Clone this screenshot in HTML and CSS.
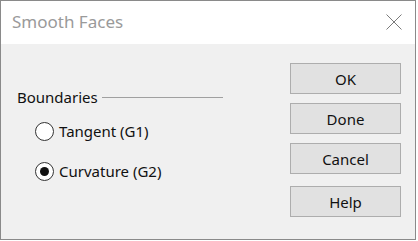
FILE: index.html
```html
<!DOCTYPE html>
<html>
<head>
<meta charset="utf-8">
<link rel="stylesheet" href="styles.css">
</head>
<body>
<div class="window">
  <div class="titlebar">
    <span class="title">Smooth Faces</span>
    <svg class="close" width="16" height="16" viewBox="0 0 16 16"><path d="M0.5 0.5 L15.5 15.5 M15.5 0.5 L0.5 15.5" stroke="#7a7a7a" stroke-width="1" fill="none"/></svg>
  </div>
  <div class="content">
    <div class="group">
      <div class="group-head"><span class="group-label">Boundaries</span><span class="rule"></span></div>
      <div class="radio-row"><span class="radio"></span><span class="radio-label">Tangent (G1)</span></div>
      <div class="radio-row"><span class="radio checked"></span><span class="radio-label">Curvature (G2)</span></div>
    </div>
    <div class="buttons">
      <div class="btn">OK</div>
      <div class="btn">Done</div>
      <div class="btn">Cancel</div>
      <div class="btn help">Help</div>
    </div>
  </div>
</div>
</body>
</html>
```
FILE: styles.css
```css
html, body { margin: 0; padding: 0; background: #ffffff; }
body { font-family: "Noto Sans", "Open Sans", sans-serif; }
.window {
  width: 416px; height: 240px; box-sizing: border-box;
  border: 1px solid #8a8a8a; background: #f0f0f0;
  display: flex; flex-direction: column;
}
.titlebar {
  height: 43px; background: #ffffff;
  display: flex; align-items: center; justify-content: space-between;
  padding: 0 14px 0 11px;
}
.title { font-size: 17px; color: #9a9a9a; margin-top: -2px; }
.close { margin-top: -1px; margin-right: -1px; }
.content {
  display: flex; justify-content: space-between;
  padding: 19px 14px 0 16px;
}
.group { display: flex; flex-direction: column; padding-top: 24px; }
.group-head { display: flex; align-items: center; height: 20px; }
.group-label { font-size: 15px; color: #111; }
.rule { width: 121px; height: 1px; background: #a0a0a0; margin-left: 4px; margin-top: 1px; }
.radio-row { display: flex; align-items: center; height: 40px; padding-left: 18px; }
.radio-row:nth-child(2) { margin-top: 4px; }
.radio {
  width: 19px; height: 19px; box-sizing: border-box; border-radius: 50%;
  border: 1px solid #333; background: #fff; margin-right: 5px;
  display: flex; align-items: center; justify-content: center;
}
.radio.checked::after { content: ""; width: 9px; height: 9px; border-radius: 50%; background: #111; }
.radio-label { font-size: 15px; color: #111; }
.buttons { display: flex; flex-direction: column; gap: 9px; }
.btn {
  width: 111px; height: 31px; box-sizing: border-box;
  border: 1px solid #adadad; background: #e1e1e1;
  display: flex; align-items: center; justify-content: center;
  font-size: 15px; color: #111;
}
.btn.help { margin-top: 3px; }
```
